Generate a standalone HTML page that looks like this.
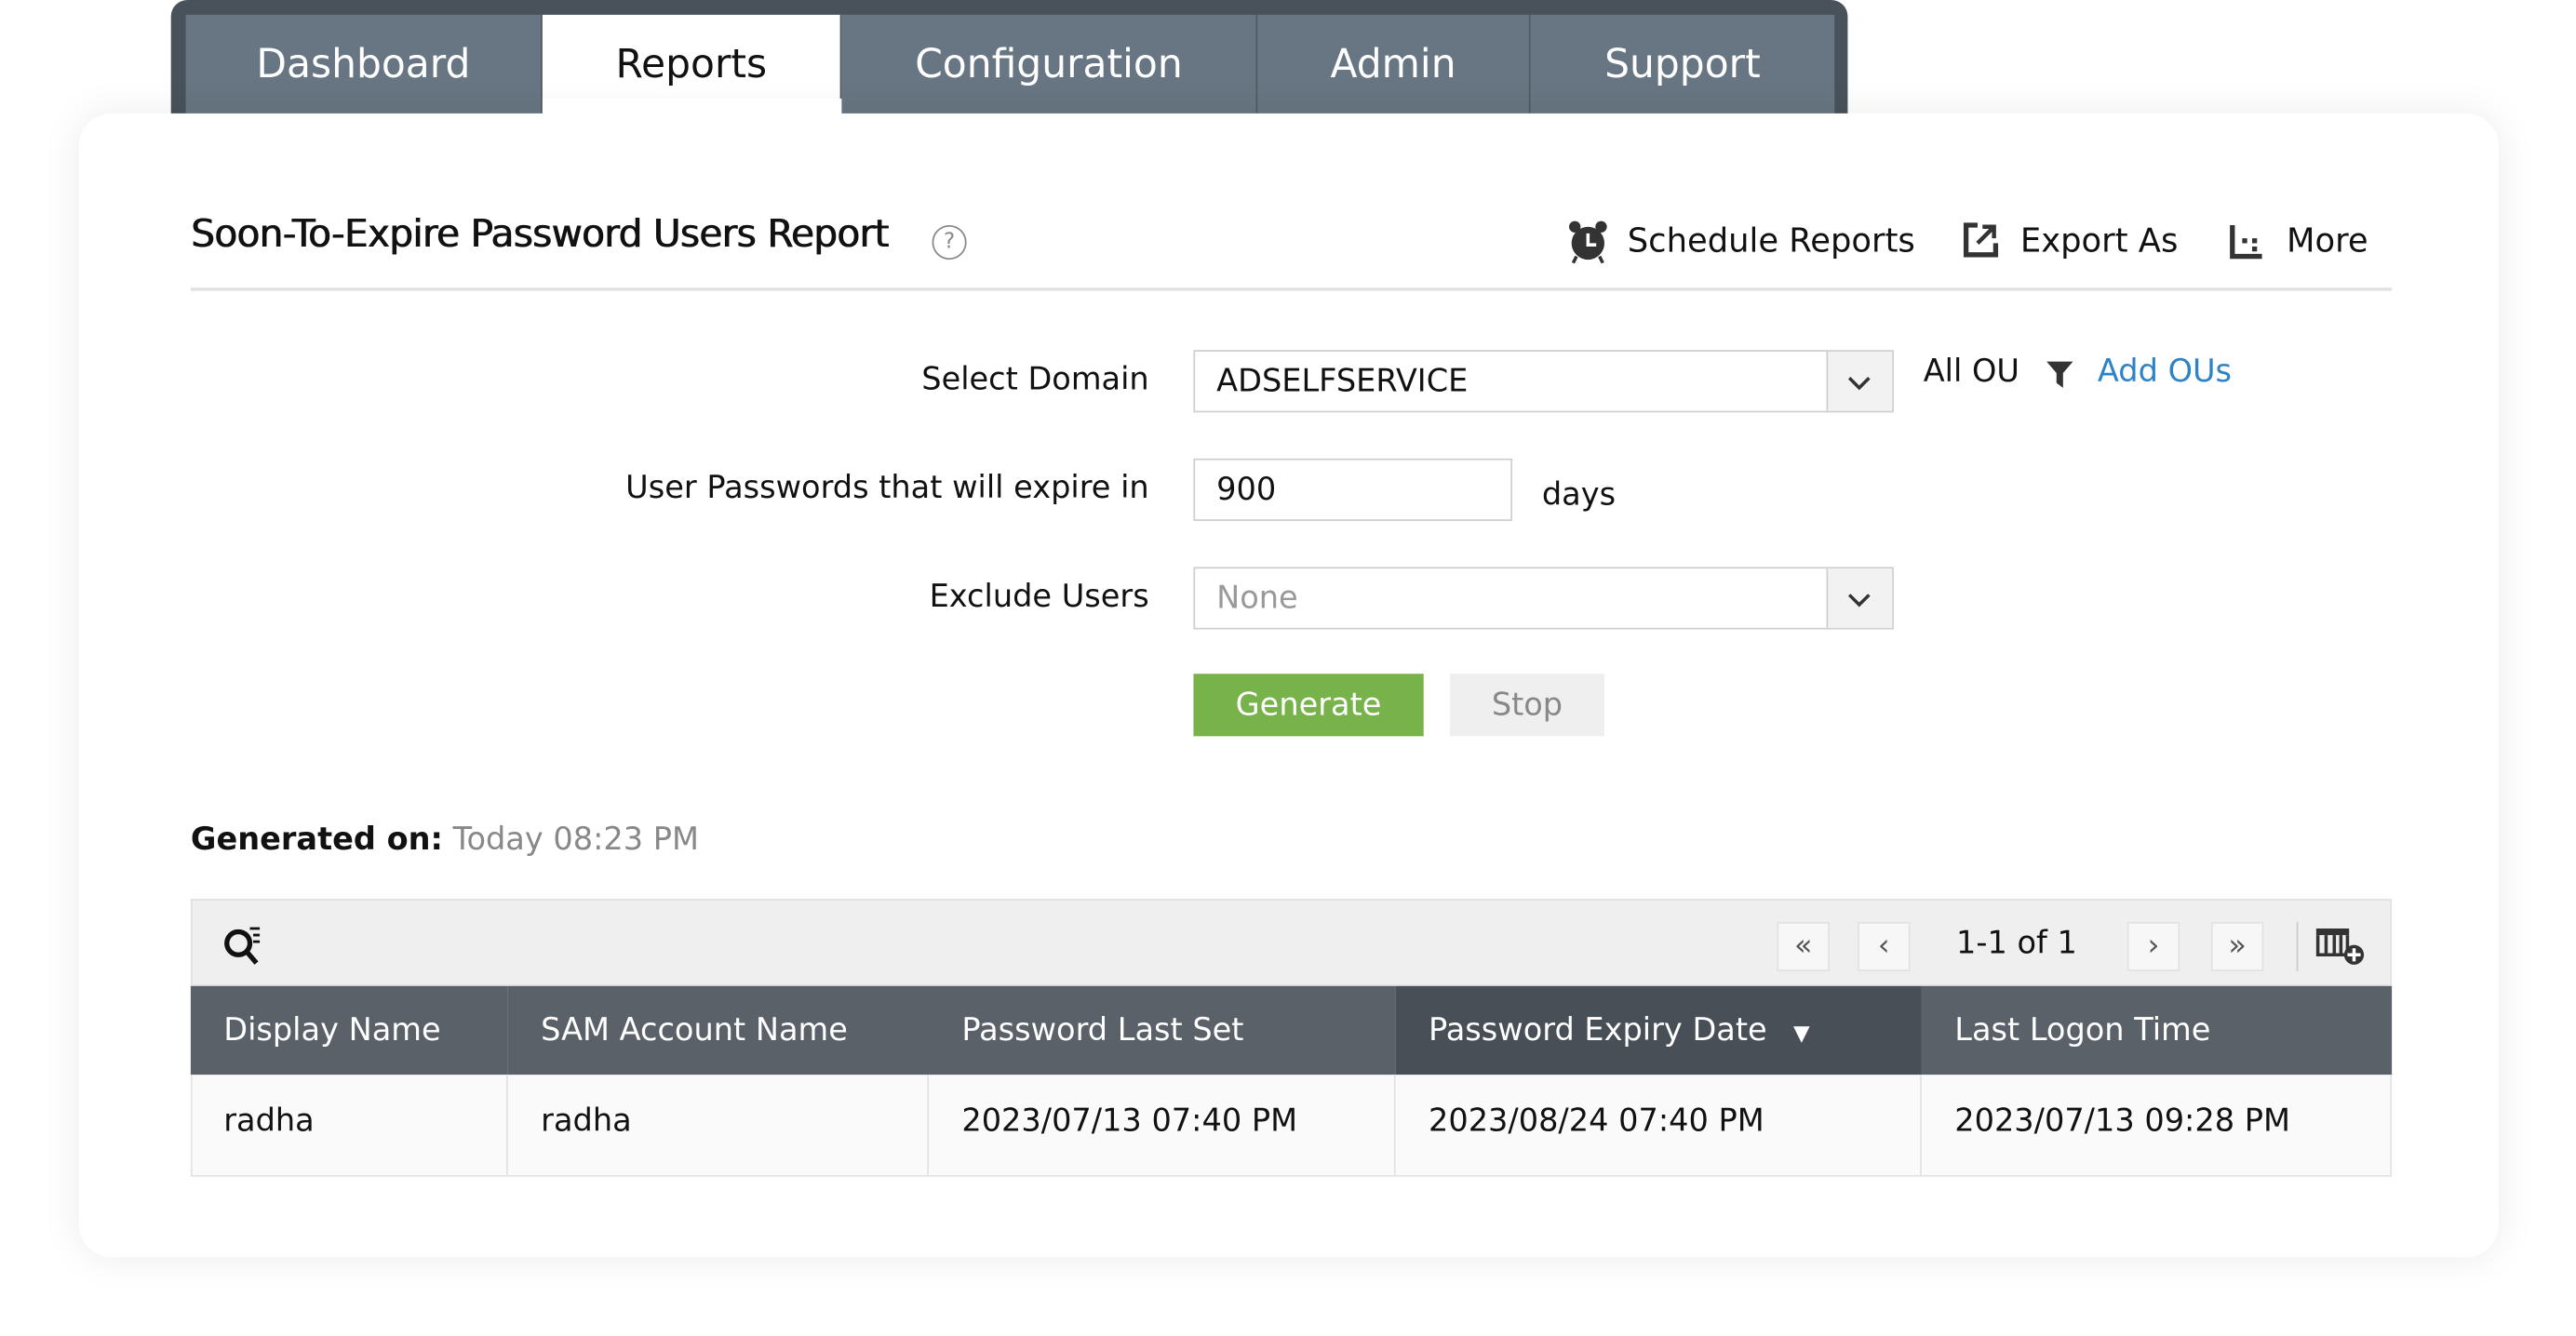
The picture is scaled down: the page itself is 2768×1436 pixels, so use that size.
<!DOCTYPE html>
<html><head><meta charset="utf-8"><style>
html,body{margin:0;padding:0;background:#fff;width:2768px;height:1436px;overflow:hidden}
#w{position:absolute;left:0;top:0;width:1567px;height:813px;transform:scale(1.7664);transform-origin:0 0;font-family:"DejaVu Sans","Liberation Sans",sans-serif;color:#111}
.a{position:absolute}
.t{position:absolute;top:9px;height:60px;line-height:60px;text-align:center;color:#fff;font-size:24px;background:#677682;border-right:1px solid #515b64;box-sizing:border-box}
.lbl{position:absolute;font-size:19px;right:868px;white-space:nowrap}
.box{position:absolute;border:1px solid #cfcfcf;background:#fff;box-sizing:border-box;font-size:19px;line-height:36px;padding-left:13px}
.dd{position:absolute;right:0;top:0;width:39px;height:36px;background:#f2f2f3;border-left:1px solid #cfcfcf}
.pb{position:absolute;top:561px;width:32px;height:30px;background:#f7f7f7;border:1px solid #e2e2e2;box-sizing:border-box;text-align:center;line-height:28px;font-size:18px;color:#555}
.th{position:absolute;top:600px;height:54px;line-height:54px;color:#fff;font-size:19px;padding-left:20px;box-sizing:border-box}
.td{position:absolute;top:654px;height:62px;line-height:56px;font-size:19px;padding-left:20px;box-sizing:border-box;border-right:1px solid #e3e3e3}
</style></head><body><div id="w">
<div class="a" style="left:104px;top:0;width:1020px;height:80px;background:#49525a;border-radius:10px 10px 0 0"></div>
<div class="t" style="left:113px;width:217px">Dashboard</div>
<div class="t" style="left:330px;width:182px;background:#fff;color:#111">Reports</div>
<div class="t" style="left:512px;width:253px">Configuration</div>
<div class="t" style="left:765px;width:166px">Admin</div>
<div class="t" style="left:931px;width:185px;border-right:none">Support</div>
<div class="a" style="left:48px;top:69px;width:1472px;height:696px;background:#fff;border-radius:20px;box-shadow:0 0 24px rgba(0,0,0,0.08)"></div>
<div class="a" style="left:330px;top:60px;width:182px;height:20px;background:#fff"></div>
<div class="a" style="left:116px;top:130px;font-size:23px;color:#111;letter-spacing:-0.4px;text-shadow:0.5px 0 #111">Soon-To-Expire Password Users Report</div>
<div class="a" style="left:567px;top:137px;width:19px;height:19px;border:1.5px solid #888;border-radius:50%;font-size:13px;line-height:19px;text-align:center;color:#888">?</div>
<svg class="a" style="left:953px;top:133px" width="26" height="28" viewBox="0 0 26 28"><circle cx="13" cy="15" r="10" fill="#333"/><circle cx="5" cy="5" r="3.5" fill="#333"/><circle cx="21" cy="5" r="3.5" fill="#333"/><path d="M13 9v7h5" stroke="#fff" stroke-width="2" fill="none"/><path d="M6 23l-2 4M20 23l2 4" stroke="#333" stroke-width="2"/></svg>
<div class="a" style="left:990px;top:134px;font-size:20px">Schedule Reports</div>
<svg class="a" style="left:1194px;top:135px" width="22" height="22" viewBox="0 0 22 22"><path d="M9 2H2v18h18v-7" stroke="#333" stroke-width="3" fill="none"/><path d="M9 13l9-9M12 3h7v7" stroke="#333" stroke-width="2.5" fill="none"/></svg>
<div class="a" style="left:1229px;top:134px;font-size:20px">Export As</div>
<svg class="a" style="left:1356px;top:136px" width="22" height="22" viewBox="0 0 22 22"><path d="M2 1v19h18" stroke="#333" stroke-width="3" fill="none"/><rect x="8" y="9" width="3" height="3" fill="#333"/><rect x="14" y="9" width="3" height="3" fill="#333"/><rect x="14" y="14" width="3" height="3" fill="#333"/></svg>
<div class="a" style="left:1391px;top:134px;font-size:20px">More</div>
<div class="a" style="left:116px;top:175px;width:1339px;height:2px;background:#e2e2e2"></div>

<div class="lbl" style="top:220px">Select Domain</div>
<div class="box" style="left:726px;top:213px;width:426px;height:38px">ADSELFSERVICE<div class="dd"><svg width="39" height="36"><path d="M13 16l6 6 6-6" stroke="#333" stroke-width="2" fill="none"/></svg></div></div>
<div class="a" style="left:1170px;top:215px;font-size:19px">All OU</div>
<svg class="a" style="left:1244px;top:219px" width="18" height="18" viewBox="0 0 18 18"><path d="M1 1h16l-6 7v9l-4-3V8z" fill="#333"/></svg>
<div class="a" style="left:1276px;top:215px;font-size:19px;color:#2e82c8">Add OUs</div>

<div class="lbl" style="top:286px">User Passwords that will expire in</div>
<div class="box" style="left:726px;top:279px;width:194px;height:38px">900</div>
<div class="a" style="left:938px;top:290px;font-size:19px">days</div>

<div class="lbl" style="top:352px">Exclude Users</div>
<div class="box" style="left:726px;top:345px;width:426px;height:38px;color:#999">None<div class="dd"><svg width="39" height="36"><path d="M13 16l6 6 6-6" stroke="#333" stroke-width="2" fill="none"/></svg></div></div>

<div class="a" style="left:726px;top:410px;width:140px;height:38px;background:#77b24a;color:#fff;font-size:19px;line-height:38px;text-align:center">Generate</div>
<div class="a" style="left:882px;top:410px;width:94px;height:38px;background:#efefef;color:#888;font-size:19px;line-height:38px;text-align:center">Stop</div>

<div class="a" style="left:116px;top:500px;font-size:19px"><b>Generated on:</b> <span style="color:#888">Today 08:23 PM</span></div>

<div class="a" style="left:116px;top:547px;width:1339px;height:53px;background:#efefef;border:1px solid #e2e2e2;box-sizing:border-box"></div>
<svg class="a" style="left:135px;top:563px" width="26" height="26" viewBox="0 0 26 26"><circle cx="10" cy="11" r="7" stroke="#111" stroke-width="3" fill="none"/><path d="M15 16l6 7" stroke="#111" stroke-width="3"/><path d="M17 2h6M19 6h4M19 10h4" stroke="#111" stroke-width="1.6"/></svg>
<div class="pb" style="left:1081px">«</div>
<div class="pb" style="left:1130px">‹</div>
<div class="a" style="left:1190px;top:563px;font-size:19px">1-1 of 1</div>
<div class="pb" style="left:1294px">›</div>
<div class="pb" style="left:1345px">»</div>
<div class="a" style="left:1397px;top:561px;width:1px;height:30px;background:#ccc"></div>
<svg class="a" style="left:1408px;top:563px" width="32" height="26" viewBox="0 0 32 26"><rect x="1" y="2" width="20" height="4" fill="#333"/><path d="M2 6v12h18V6M7 6v12M12 6v12M16 6v12" stroke="#333" stroke-width="2" fill="none"/><circle cx="24" cy="18" r="6" fill="#333"/><path d="M24 14v8M20 18h8" stroke="#fff" stroke-width="2"/></svg>

<div class="th" style="left:116px;width:193px;background:#5a6169">Display Name</div>
<div class="th" style="left:309px;width:256px;background:#5a6169">SAM Account Name</div>
<div class="th" style="left:565px;width:284px;background:#5a6169">Password Last Set</div>
<div class="th" style="left:849px;width:320px;background:#484f57">Password Expiry Date <span style="font-size:13px;margin-left:10px">▼</span></div>
<div class="th" style="left:1169px;width:286px;background:#5a6169">Last Logon Time</div>

<div class="a" style="left:116px;top:654px;width:1339px;height:62px;background:#fafafa;border:1px solid #e3e3e3;border-top:none;box-sizing:border-box"></div>
<div class="td" style="left:116px;width:193px">radha</div>
<div class="td" style="left:309px;width:256px">radha</div>
<div class="td" style="left:565px;width:284px">2023/07/13 07:40 PM</div>
<div class="td" style="left:849px;width:320px">2023/08/24 07:40 PM</div>
<div class="td" style="left:1169px;width:286px;border-right:none">2023/07/13 09:28 PM</div>
</div></body></html>
